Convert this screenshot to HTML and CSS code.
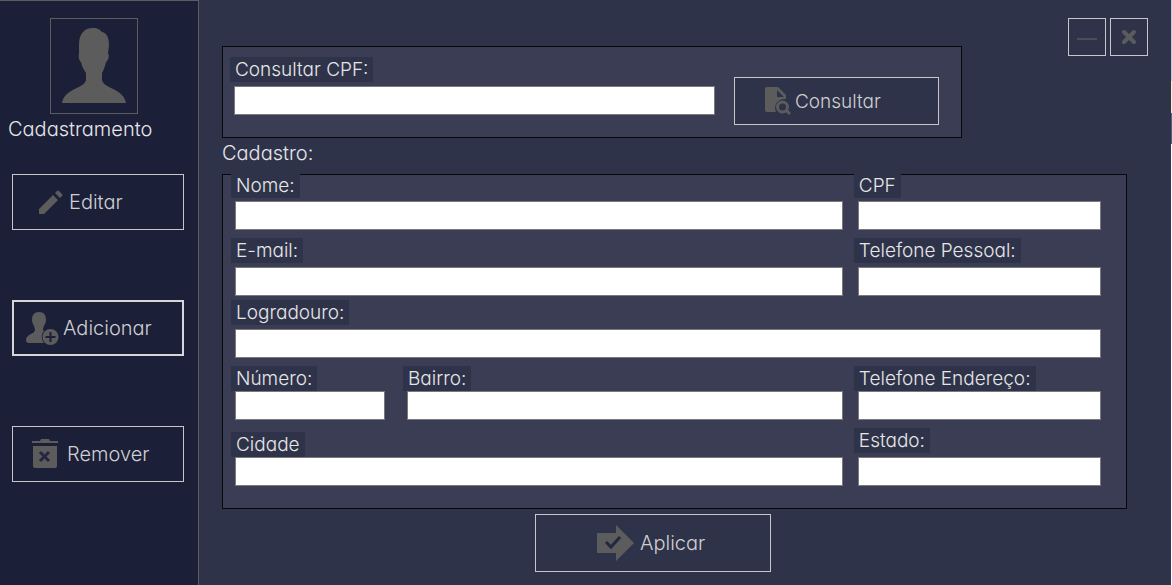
FILE: index.html
```html
<!DOCTYPE html>
<html lang="pt-BR">
<head>
<meta charset="utf-8">
<title>Cadastramento</title>
<link rel="stylesheet" href="styles.css">
</head>
<body>
<div class="window">
  <aside class="sidebar">
    <div class="avatar">
      <svg width="66" height="78" viewBox="0 0 66 78" aria-hidden="true"><path d="M32 1C37 1 39 3 41 5C46 6 48 11 48 18L47 27C49 28 47 34 45 35C44 40 42 44 41 46V53C43 62 62 61 65 76H1C4 61 23 62 25 53V46C23 43 21 40 20 35C18 34 17 28 18 27L18 18C18 7 23 1 32 1Z"/></svg>
    </div>
    <h1 class="title">Cadastramento</h1>
    <nav class="menu">
      <button class="btn btn--edit" type="button">
        <svg width="24" height="25" viewBox="0 0 24 25" aria-hidden="true"><path d="M0 19L14 5L19 10L5 24H0ZM16 3L18 1Q19 0 20 1L23 4Q24 5 23 6L21 8Z"/></svg>
        Editar
      </button>
      <button class="btn btn--add" type="button">
        <svg width="33" height="33" viewBox="0 0 33 33" aria-hidden="true"><path fill-rule="evenodd" d="M13 0C18 0 20 3 20 8C20 12 17 14 17 18L18 19C15 22 15 27 18 31H3C1 31 0 30 0 28C0 22 9 22 9 18C9 14 6 12 6 8C6 3 8 0 13 0ZM24.500 17A8 8 0 1 1 24.500 33A8 8 0 1 1 24.500 17ZM23.500 20V24H19.500V26H23.500V30H25.500V26H29.500V24H25.500V20Z"/></svg>
        Adicionar
      </button>
      <button class="btn btn--remove" type="button">
        <svg width="26" height="30" viewBox="0 0 26 30" aria-hidden="true"><path d="M0 2H8L9 0H17L18 2H26V4H0ZM1 7H25V27Q25 29 23 29H3Q1 29 1 27Z"/><path class="cut" d="M8 13L17 22M17 13L8 22"/></svg>
        Remover
      </button>
    </nav>
  </aside>

  <main class="main">
    <header class="top">
      <form class="panel search">
        <div class="field field--search">
          <label for="consulta">Consultar CPF:</label>
          <input id="consulta" type="text">
        </div>
        <button class="btn btn--search" type="button">
          <svg width="26" height="28" viewBox="0 0 26 28" aria-hidden="true"><path fill-rule="evenodd" d="M2 0H13L21 8V12C13 11 8 18 11 25H2Q0 25 0 23V2Q0 0 2 0ZM12 3V10H19Z"/><circle class="line" cx="17.500" cy="20" r="5"/><path class="line" d="M21 23L25 27"/></svg>
          Consultar
        </button>
      </form>
      <div class="controls">
        <button class="btn btn--window" type="button" aria-label="Minimizar">
          <svg width="20" height="20" viewBox="0 0 20 20" aria-hidden="true"><path class="dash" d="M0 12H20"/></svg>
        </button>
        <button class="btn btn--window" type="button" aria-label="Fechar">
          <svg width="20" height="20" viewBox="0 0 20 20" aria-hidden="true"><path class="cross" d="M5 5L15 15M15 5L5 15"/></svg>
        </button>
      </div>
    </header>

    <h2 class="subtitle">Cadastro:</h2>

    <form class="register">
      <div class="panel fields">
        <div class="row">
          <div class="field field--snug">
            <label for="nome">Nome:</label>
            <input id="nome" type="text">
          </div>
          <div class="field field--snug">
            <label for="cpf">CPF</label>
            <input id="cpf" type="text">
          </div>
        </div>
        <div class="group">
          <div class="row">
            <div class="field">
              <label for="email">E-mail:</label>
              <input id="email" type="email">
            </div>
            <div class="field">
              <label for="telefone">Telefone Pessoal:</label>
              <input id="telefone" type="tel">
            </div>
          </div>
          <div class="field">
            <label for="logradouro">Logradouro:</label>
            <input id="logradouro" type="text">
          </div>
        </div>
        <div class="row">
          <div class="pair">
            <div class="field field--tight">
              <label for="numero">Número:</label>
              <input id="numero" type="text">
            </div>
            <div class="field field--tight">
              <label for="bairro">Bairro:</label>
              <input id="bairro" type="text">
            </div>
          </div>
          <div class="field field--tight">
            <label for="telefone-endereco">Telefone Endereço:</label>
            <input id="telefone-endereco" type="tel">
          </div>
        </div>
        <div class="row">
          <div class="field field--tight">
            <label for="cidade">Cidade</label>
            <input id="cidade" type="text">
          </div>
          <div class="field">
            <label for="estado">Estado:</label>
            <input id="estado" type="text">
          </div>
        </div>
      </div>
      <button class="btn btn--apply" type="button">
        <svg width="37" height="36" viewBox="0 0 37 36" aria-hidden="true"><path d="M0 8H19V0L37 18L19 36V28H0Z"/><path class="cut" d="M9 17L14 22L23 12"/></svg>
        Aplicar
      </button>
    </form>
  </main>
</div>
</body>
</html>
```
FILE: styles.css
```css
* {
  box-sizing: border-box;
}

body {
  margin: 0;
  background: #2f3349;
  color: #e6e6e8;
  font-family: "Century Gothic", Inter, "Open Sans", sans-serif;
  font-feature-settings: "cv11";
  font-size: 19px;
  font-weight: 300;
  line-height: 25px;
}

.window {
  display: flex;
  min-height: 100vh;
  border-right: 1px solid;
  border-image: linear-gradient(#c3cae8 82px, #fff0cc 82px, #fff0cc 114px, #56608a 114px, #56608a 145px, #fff 145px) 1;
}

/* Sidebar */

.sidebar {
  display: flex;
  flex-direction: column;
  flex: 0 0 199px;
  padding: 17px 14px 0 12px;
  border-top: 1px solid #5c5c5c;
  border-right: 1px solid #5c5c5c;
  background: #1b1f38;
}

.avatar {
  display: flex;
  justify-content: center;
  align-items: center;
  width: 88px;
  height: 96px;
  margin-left: 38px;
  border: 1px solid #5c5c5c;
}

.title,
.subtitle {
  margin: 0;
  font-size: 20px;
  font-weight: inherit;
}

.title {
  margin: 3px 0 0 -4px;
}

.menu {
  display: flex;
  flex-direction: column;
  gap: 70px;
  margin-top: 32px;
}

/* Buttons and icons */

.btn {
  display: flex;
  align-items: center;
  gap: 6px;
  height: 56px;
  padding: 0;
  border: 1px solid #c6c7ca;
  background: transparent;
  color: #cfcfd2;
  font: inherit;
  font-feature-settings: inherit;
}

svg {
  flex: none;
  fill: #5c5c5c;
}

.cut,
.line,
.dash,
.cross {
  fill: none;
  stroke: #5c5c5c;
  stroke-width: 3px;
}

.cut {
  stroke: #23273f;
}

.dash {
  stroke: #4c4d55;
  stroke-width: 2px;
}

.cross {
  stroke-width: 4px;
  stroke-linecap: round;
}

.menu .btn {
  font-size: 20px;
}

.btn--edit {
  padding-left: 26px;
}

.btn--add {
  padding-left: 12px;
  border: 2px solid #d6d6d8;
  gap: 4px;
}

.btn--remove {
  padding-left: 19px;
  gap: 9px;
}

.btn--search {
  gap: 4px;
  width: 205px;
  height: 48px;
  padding-left: 30px;
  background: #2f3349;
}

.btn--window {
  justify-content: center;
  width: 38px;
  height: 38px;
}

.btn--apply {
  width: 236px;
  height: 58px;
  margin-left: 313px;
  padding-left: 61px;
  font-size: 20px;
}

/* Content */

.main {
  flex: 1;
  min-width: 0;
  padding: 18px 0 12px 23px;
}

.top {
  display: flex;
  gap: 106px;
  padding-right: 23px;
}

.controls {
  display: flex;
  gap: 4px;
}

.panel {
  border: 1px solid #07080c;
  background: #3a3d53;
}

.search {
  display: flex;
  flex: 1;
  align-items: flex-end;
  gap: 19px;
  margin-top: 28px;
  padding: 10px 22px 12px 11px;
}

.subtitle {
  margin: 3px 0 8px;
}

.register {
  display: flex;
  flex-direction: column;
  align-items: flex-start;
  gap: 5px;
  padding-right: 44px;
}

.fields {
  display: flex;
  flex-direction: column;
  align-self: stretch;
  gap: 8px;
  padding: 0 25px 22px 12px;
}

.fields > .row:first-child {
  margin-top: -2px;
}

.group {
  display: flex;
  flex-direction: column;
  gap: 4px;
}

.row,
.pair {
  display: grid;
  align-items: end;
}

.row {
  grid-template-columns: 5fr 2fr;
  column-gap: 15px;
}

.pair {
  grid-template-columns: 150fr 436fr;
  column-gap: 22px;
}

.field {
  display: flex;
  flex-direction: column;
  gap: 4px;
  min-width: 0;
}

.field--snug {
  gap: 3px;
}

.field--tight {
  gap: 0;
}

.field--search {
  flex: 1;
  margin-bottom: 10px;
}

.field label {
  align-self: flex-start;
  margin-left: -4px;
  padding: 0 5px;
  background: #2f3349;
}

.field input {
  width: 100%;
  height: 29px;
  padding: 0 6px;
  border: 1px solid #7a7a7a;
  border-radius: 0;
  background: #fff;
  color: #1b1f38;
  font: inherit;
}
```
